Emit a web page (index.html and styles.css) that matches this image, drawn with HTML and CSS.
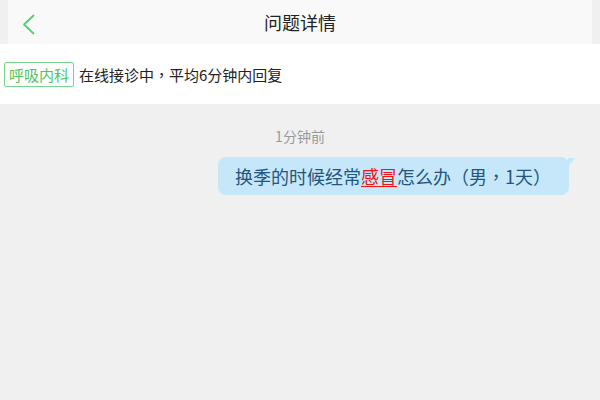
FILE: index.html
```html
<!DOCTYPE html>
<html lang="zh-CN">
<head>
<meta charset="utf-8">
<title>问题详情</title>
<link rel="stylesheet" href="styles.css">
</head>
<body>
<header class="topbar">
  <a class="back" href="#" aria-label="返回">
    <svg width="13" height="21" viewBox="0 0 13 21"><polyline points="11.5,1.5 2,10.5 11.5,19.5" fill="none" stroke="#4cd36a" stroke-width="1.8" stroke-linecap="round" stroke-linejoin="round"/></svg>
  </a>
  <h1 class="title">问题详情</h1>
</header>
<section class="info">
  <span class="tag">呼吸内科</span>
  <span class="info-text">在线接诊中<span class="punct" lang="zh-TW">，</span>平均6分钟内回复</span>
</section>
<main class="chat">
  <div class="time">1分钟前</div>
  <div class="msg-row">
    <div class="bubble">换季的时候经常<span class="kw">感冒</span>怎么办（男<span class="punct" lang="zh-TW">，</span>1天）<span class="tail"></span></div>
  </div>
</main>
</body>
</html>
```
FILE: styles.css
```css
html, body {
  margin: 0;
  padding: 0;
}
body {
  background: #f0f0f0;
  font-family: "Noto Sans CJK SC", "Noto Sans", sans-serif;
  width: 600px;
  height: 400px;
  overflow: hidden;
}
.punct {
  font-family: "Noto Sans CJK TC", "Noto Sans CJK SC", sans-serif;
}
.topbar {
  margin: 0 8px;
  height: 44px;
  background: #f9f9f9;
  display: flex;
  align-items: center;
  position: relative;
}
.back {
  display: flex;
  align-items: center;
  padding-left: 14px;
  padding-top: 5px;
  height: 39px;
}
.title {
  position: absolute;
  left: 0;
  right: 0;
  top: 0;
  margin: 0;
  line-height: 44px;
  text-align: center;
  font-size: 18px;
  font-weight: normal;
  color: #222;
  pointer-events: none;
}
.info {
  height: 60px;
  background: #fff;
  display: flex;
  align-items: center;
  padding-left: 4px;
  gap: 5px;
}
.tag {
  border: 1px solid #7ad68a;
  border-radius: 2px;
  color: #4cc463;
  font-size: 15px;
  line-height: 23px;
  padding: 0 4px;
}
.info-text {
  font-size: 15px;
  color: #222;
}
.chat {
  padding-top: 22px;
}
.time {
  text-align: center;
  font-size: 14px;
  color: #999;
  line-height: 20px;
}
.msg-row {
  display: flex;
  justify-content: flex-end;
  padding-right: 31px;
  margin-top: 11px;
}
.bubble {
  position: relative;
  background: #c6e7fa;
  border-radius: 8px;
  height: 38px;
  line-height: 38px;
  padding: 0 18px 0 17px;
  font-size: 18px;
  color: #24557e;
  white-space: nowrap;
}
.kw {
  color: #f01414;
  text-decoration: underline;
  text-underline-offset: 2px;
}
.tail {
  position: absolute;
  right: -6px;
  top: 1px;
  width: 0;
  height: 0;
  border-top: 9px solid #c6e7fa;
  border-right: 7px solid transparent;
}
```
